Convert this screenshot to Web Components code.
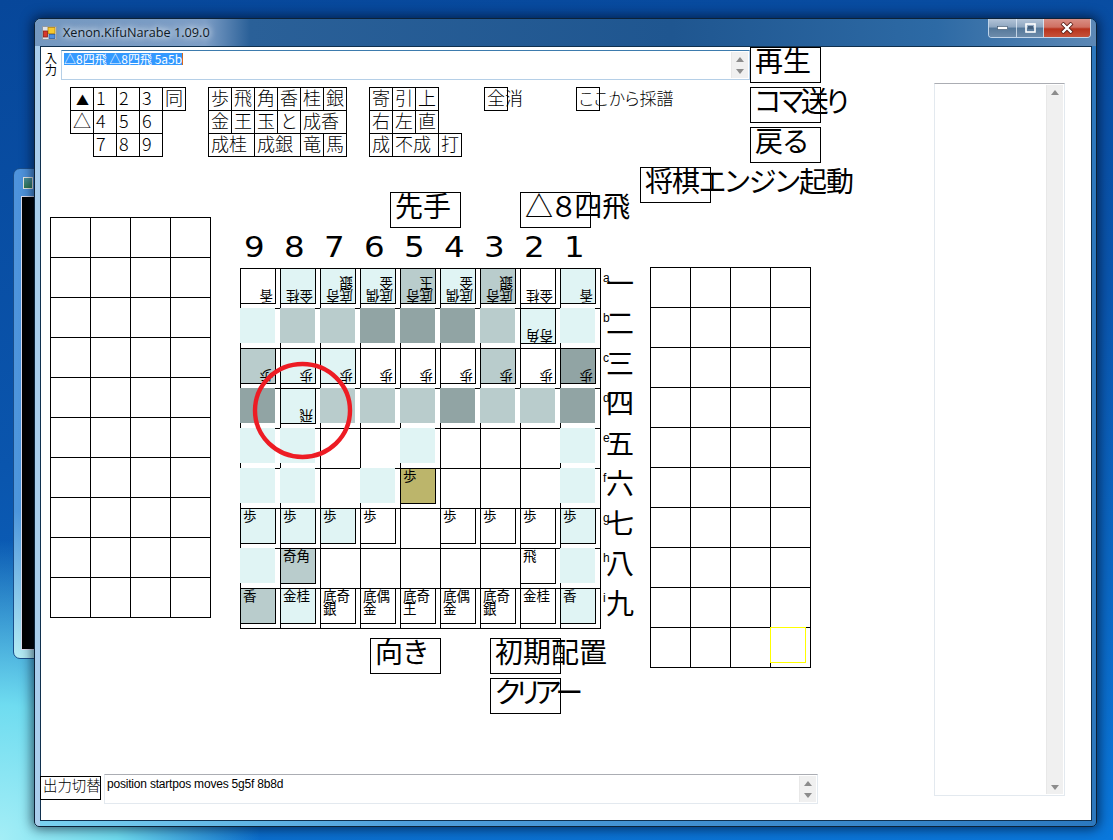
<!DOCTYPE html>
<html lang="ja">
<head>
<meta charset="utf-8">
<title>Xenon.KifuNarabe</title>
<style>
  html, body { margin: 0; height: 100%; overflow: hidden; }
  body {
    font-family: "Noto Sans CJK JP", "Noto Sans", sans-serif;
    background:
      radial-gradient(ellipse 260px 300px at 0 100%, #a4eef6 0%, #6fdcf0 45%, rgba(60,170,225,0) 100%),
      linear-gradient(170deg, #07479a 0%, #0a55ad 45%, #0b68c4 75%, #0a78dc 100%);
  }
</style>
</head>
<body>

<back-window></back-window>
<aero-window caption="Xenon.KifuNarabe 1.09.0">
  <kifu-form></kifu-form>
</aero-window>

<script>
// small push button, the text is allowed to run out of the box like in the real form
class WinButton extends HTMLElement {
  constructor() {
    super();
    this.attachShadow({ mode: 'open' }).innerHTML = `
      <style>
        :host {
          display: block;
          box-sizing: border-box;
          border: 1px solid #000;
          margin: 0 -1px -1px 0;
          padding: 0 0 0 2px;
          background: #fff;
          color: #000;
          font-size: var(--key-size, 18px);
          font-weight: 300;
          line-height: 19px;
          white-space: nowrap;
        }
        :host([big]) {
          width: 71px;
          height: 36px;
          margin: 0;
          padding: 0 0 0 4px;
          font-size: 28px;
          font-weight: 400;
          line-height: 24px;
          font-feature-settings: "palt";
        }
        :host([small]) {
          margin: 0;
          font-size: 14.4px;
          padding: 0 0 0 2px;
          line-height: 15px;
        }
      </style>
      <slot></slot>`;
  }
}

// rows of keys: "," between keys, "|" between rows, "_" leaves a hole, "*2" makes a key two wide
class KeyPad extends HTMLElement {
  connectedCallback() {
    let html = '';
    this.getAttribute('keys').split('|').forEach((row, r) => {
      let col = 1;
      row.split(',').forEach(key => {
        let [label, span] = key.split('*');
        span = Number(span || 1);
        if (label !== '_') {
          html += `<win-button style="grid-row:${r + 1};grid-column:${col} / span ${span}">${label}</win-button>`;
        }
        col += span;
      });
    });
    this.attachShadow({ mode: 'open' }).innerHTML = `
      <style>
        :host { display: grid; grid-auto-columns: 23px; grid-auto-rows: 23px; align-self: start; }
      </style>${html}`;
  }
}

class ScrollBar extends HTMLElement {
  constructor() {
    super();
    this.attachShadow({ mode: 'open' }).innerHTML = `
      <style>
        :host {
          display: flex;
          flex-direction: column;
          align-items: center;
          justify-content: space-between;
          box-sizing: border-box;
          width: 17px;
          padding: 5px 0 4px;
          background: #f0f0f0;
          border-left: 1px solid #e8e8e8;
        }
        svg { display: block; }
      </style>
      <svg width="8" height="5"><polygon points="4,0 8,5 0,5" fill="#8c8c8c"/></svg>
      <svg width="8" height="5"><polygon points="0,0 8,0 4,5" fill="#8c8c8c"/></svg>`;
  }
}

class TextBox extends HTMLElement {
  constructor() {
    super();
    this.attachShadow({ mode: 'open' }).innerHTML = `
      <style>
        :host {
          display: flex;
          box-sizing: border-box;
          border: 1px solid #e3e9ef;
          border-top-color: #abadb3;
          background: #fff;
          color: #000;
          font-size: 12px;
          line-height: 12px;
        }
        :host([focused]) { border-color: #b5cfe7; border-top-color: #3d7bad; }
        .text { flex: 1; padding: 2px; white-space: nowrap; overflow: hidden; }
        scroll-bar { margin: 1px; }
      </style>
      <div class="text"><slot></slot></div>
      <scroll-bar></scroll-bar>`;
  }
}

// one square of the board, or of a hand. tone: l m d o (colours), y (yellow cursor), w (white)
class ShogiPiece extends HTMLElement {
  constructor() {
    super();
    this.attachShadow({ mode: 'open' }).innerHTML = `
      <style>
        :host {
          display: block;
          box-sizing: border-box;
          width: 36px;
          height: 36px;
          margin: -1px 0 0 -1px;
          padding: 0 0 0 2px;
          border: 1px solid #000;
          background: #fff;
          color: #000;
          font-size: 13.5px;
          line-height: 13px;
          position: relative;
        }
        :host([flip]) { transform: rotate(180deg); }
        :host([flat]) { width: 35px; height: 35px; border: 0; }
        :host([tone=l]) { background: #e0f4f4; }
        :host([tone=m]) { background: #b9cccc; }
        :host([tone=d]) { background: #91a4a4; }
        :host([tone=o]) { background: #bcb56b; }
        :host([tone=y]) { border-color: #ffff00; }
      </style>
      <slot></slot>`;
  }
}

class ShogiBoard extends HTMLElement {
  connectedCallback() {
    const rows = [
      'w:香 l:金桂 l:底奇銀 l:底偶金 m:底奇玉 l:底偶金 m:底奇銀 w:金桂 l:香',
      'l m m d d d m l:奇角 l',
      'm:歩 l:歩 l:歩 w:歩 w:歩 w:歩 m:歩 w:歩 d:歩',
      'd l:飛 m m m d m m d',
      'l l - - l - - - l',
      'l l - l o:歩 - - - l',
      'l:歩 l:歩 l:歩 w:歩 - w:歩 w:歩 w:歩 l:歩',
      'l m:奇角 - - - - - w:飛 l',
      'm:香 l:金桂 w:底奇銀 w:底偶金 w:底奇王 w:底偶金 w:底奇銀 w:金桂 l:香'
    ];
    let cells = '';
    rows.forEach((row, r) => {
      row.split(' ').forEach(item => {
        let [tone, label] = item.split(':');
        if (tone === '-') { cells += '<div></div>'; return; }
        // the gote side (a to d) stands upside down
        let flip = r < 4 ? 'flip' : '';
        if (label) cells += `<div><shogi-piece tone="${tone}" ${flip}>${label}</shogi-piece></div>`;
        else cells += `<div><shogi-piece tone="${tone}" flat></shogi-piece></div>`;
      });
    });
    this.attachShadow({ mode: 'open' }).innerHTML = `
      <style>
        :host {
          display: grid;
          grid-template-columns: repeat(9, 40px);
          grid-auto-rows: 40px;
          width: max-content;
          position: relative;
          border-top: 1px solid #000;
          border-left: 1px solid #000;
          background: #fff;
        }
        div { box-sizing: border-box; border-right: 1px solid #000; border-bottom: 1px solid #000; }
        svg { position: absolute; left: 11px; top: 92px; }
      </style>
      ${cells}
      <svg width="101" height="99" viewBox="0 0 101 99">
        <ellipse cx="50.5" cy="49.5" rx="47.5" ry="46.5" fill="none" stroke="#ed1c24" stroke-width="4.4"/>
      </svg>`;
  }
}

// piece stand beside the board, 4 x 10
class ShogiStand extends HTMLElement {
  connectedCallback() {
    let cells = '';
    for (let i = 0; i < 40; i++) {
      let cursor = this.hasAttribute('cursor') && i === 39;
      cells += cursor ? '<div><shogi-piece tone="y"></shogi-piece></div>' : '<div></div>';
    }
    this.attachShadow({ mode: 'open' }).innerHTML = `
      <style>
        :host {
          display: grid;
          grid-template-columns: repeat(4, 40px);
          grid-auto-rows: 40px;
          width: max-content;
          align-self: start;
          border-top: 1px solid #000;
          border-left: 1px solid #000;
        }
        div { box-sizing: border-box; border-right: 1px solid #000; border-bottom: 1px solid #000; }
      </style>${cells}`;
  }
}

class KifuForm extends HTMLElement {
  connectedCallback() {
    let files = [9, 8, 7, 6, 5, 4, 3, 2, 1].map(n => `<span>${n}</span>`).join('');
    let ranks = [...'一二三四五六七八九'].map((k, i) =>
      `<div class="rank"><small>${'abcdefghi'[i]}</small><b>${k}</b></div>`).join('');

    this.attachShadow({ mode: 'open' }).innerHTML = `
      <style>
        :host { display: flex; flex: 1; min-height: 0; color: #000; }
        .main { width: 893px; display: flex; flex-direction: column; }
        .head { display: flex; }
        .head-left { width: 709px; }
        .input-row { display: flex; margin-top: 3px; height: 30px; }
        .input-label { width: 20px; padding: 2px 0 0 4px; box-sizing: border-box; font-size: 12px; line-height: 12px; }
        .input-row text-box { width: 689px; }
        .sel { background: #3399ff; color: #fff; border-right: 1px solid #d2691e; display: inline-block; }
        .keys { display: flex; gap: 23px; padding: 7px 0 0 29px; }
        .keys .tight { --key-size: 17px; font-feature-settings: "palt"; margin-left: 46px; }
        .stack { display: flex; flex-direction: column; gap: 4px; }
        .play {
          display: grid;
          grid-template-columns: 190px 400px auto;
          padding-left: 9px;
          margin-top: 4px;
        }
        .left-stand { margin-top: 50px; }
        .top-btns { display: flex; margin-top: 25px; padding-left: 150px; gap: 59px; }
        .files { display: grid; grid-template-columns: repeat(9, 40px); height: 40px; font: 29px/38px "DejaVu Sans", sans-serif; }
        .files span { padding-left: 4px; transform: scaleX(1.12); transform-origin: 4px 0; }
        .board-row { display: flex; }
        .ranks { display: grid; grid-auto-rows: 40px; }
        .rank { display: flex; padding-left: 2px; }
        .rank small { width: 3px; font: 12px/12px "Liberation Sans", sans-serif; margin-top: 4px; }
        .rank b { font-weight: 400; font-size: 28px; line-height: 28px; }
        .bottom-btns { display: flex; padding: 9px 0 0 130px; gap: 49px; }
        .bottom-col { display: flex; flex-direction: column; gap: 4px; }
        .right { display: flex; flex-direction: column; align-items: flex-start; }
        .right shogi-stand { margin: 64px 0 0 10px; }
        .output { display: flex; margin: auto 0 16px -1px; }
        .output win-button { width: 61px; height: 24px; margin: 2px 0 0; padding-left: 2px; }
        .output text-box { width: 714px; height: 30px; margin-left: 3px; }
        .output-text { font-family: "Liberation Sans", sans-serif; letter-spacing: -.2px; }
        .log { width: 131px; height: 713px; margin-top: 36px; }
      </style>

      <div class="main">
        <div class="head">
          <div class="head-left">
            <div class="input-row">
              <div class="input-label">入力</div>
              <text-box focused><span class="sel">△8四飛 △8四飛 5a5b</span></text-box>
            </div>
            <div class="keys">
              <key-pad keys="<span style='font-size:13px;padding-left:3px'>▲</span>,1,2,3,同|△,4,5,6|_,7,8,9"></key-pad>
              <key-pad keys="歩,飛,角,香,桂,銀|金,王,玉,と,成香*2|成桂*2,成銀*2,竜,馬"></key-pad>
              <key-pad keys="寄,引,上|右,左,直|成,不成*2,打"></key-pad>
              <key-pad keys="全消"></key-pad>
              <key-pad class="tight" keys="ここから採譜"></key-pad>
            </div>
          </div>
          <div class="stack">
            <win-button big>再生</win-button>
            <win-button big style="letter-spacing:-3px">コマ送り</win-button>
            <win-button big>戻る</win-button>
          </div>
        </div>

        <div class="play">
          <shogi-stand class="left-stand"></shogi-stand>
          <div>
            <div class="top-btns">
              <win-button big>先手</win-button>
              <win-button big>△８四飛</win-button>
            </div>
            <div class="files">${files}</div>
            <div class="board-row">
              <shogi-board></shogi-board>
              <div class="ranks">${ranks}</div>
            </div>
            <div class="bottom-btns">
              <win-button big>向き</win-button>
              <div class="bottom-col">
                <win-button big>初期配置</win-button>
                <win-button big style="letter-spacing:-4px">クリアー</win-button>
              </div>
            </div>
          </div>
          <div class="right">
            <win-button big style="letter-spacing:-1px">将棋エンジン起動</win-button>
            <shogi-stand cursor></shogi-stand>
          </div>
        </div>

        <div class="output">
          <win-button small>出力切替</win-button>
          <text-box><span class="output-text">position startpos moves 5g5f 8b8d</span></text-box>
        </div>
      </div>

      <text-box class="log"></text-box>`;
  }
}

class AeroWindow extends HTMLElement {
  connectedCallback() {
    this.attachShadow({ mode: 'open' }).innerHTML = `
      <style>
        :host {
          position: absolute;
          left: 34px;
          top: 18px;
          width: 1063px;
          height: 809px;
          box-sizing: border-box;
          display: flex;
          flex-direction: column;
          border: 1px solid #0c2238;
          border-radius: 7px 7px 5px 5px;
          box-shadow: 0 0 12px 2px rgba(0, 10, 30, .65);
          overflow: hidden;
          background:
            linear-gradient(90deg, #a9cdec 0, #a9cdec 5px, transparent 5px, transparent calc(100% - 5px), #2d78bd calc(100% - 5px)),
            linear-gradient(90deg, #7ad2f0 0%, #4f9fdc 35%, #2b79c0 100%);
        }
        .bar {
          height: 27px;
          display: flex;
          align-items: flex-start;
          background: linear-gradient(90deg, #7498c0 0, #7d9ec6 170px, #2a6098 215px, #1f5690 60%, #2d6aa5 85%, #5c88b5 100%);
        }
        .icon { margin: 7px 0 0 7px; }
        .title {
          margin: 5px 0 0 6px;
          font: 12.7px/16px "Open Sans", "Noto Sans", sans-serif;
          color: #0e1a26;
          text-shadow: 0 0 7px #fff, 0 0 7px rgba(255,255,255,.7);
        }
        .caption {
          margin-left: auto;
          margin-right: 5px;
          display: flex;
          height: 19px;
          box-sizing: border-box;
          border: 1px solid rgba(235, 245, 255, .75);
          border-top: 0;
          border-radius: 0 0 4px 4px;
          overflow: hidden;
        }
        .caption div { display: flex; align-items: center; justify-content: center; }
        .min, .max {
          width: 27px;
          background: linear-gradient(#b3c4d8 0, #8ea6c0 45%, #547799 50%, #6d8cab 100%);
          border-right: 1px solid rgba(235, 245, 255, .7);
        }
        .max { width: 26px; }
        .close { width: 46px; background: linear-gradient(#d98f85 0, #cf7062 45%, #b8331d 55%, #c6523a 100%); }
        .body { flex: 1; min-height: 0; display: flex; padding: 0 4px 5px 5px; }
        .client { flex: 1; display: flex; box-sizing: border-box; background: #fff; border: 1px solid #10304e; min-width: 0; }
        ::slotted(*) { flex: 1; }
      </style>
      <div class="bar">
        <svg class="icon" width="15" height="14" viewBox="0 0 15 14">
          <rect x=".5" y=".5" width="14" height="13" fill="#dfe3e8" stroke="#8f99a5"/>
          <rect x="6" y="1.5" width="7" height="6" fill="#f7c92e" stroke="#b5860c" stroke-width=".8"/>
          <rect x="1.5" y="5" width="4" height="6" fill="#d8382c" stroke="#8a1c14" stroke-width=".8"/>
          <rect x="7" y="8.5" width="6" height="4" fill="#4f8fe0" stroke="#2a5a9e" stroke-width=".8"/>
        </svg>
        <div class="title">${this.getAttribute('caption')}</div>
        <div class="caption">
          <div class="min"><svg width="11" height="4"><rect x=".5" y=".5" width="10" height="3" fill="#fff" stroke="#3a4f66" stroke-width=".6"/></svg></div>
          <div class="max"><svg width="11" height="10"><rect x="1" y="1" width="9" height="8" fill="none" stroke="#fff" stroke-width="1.6"/><rect x="3" y="3" width="5" height="3" fill="#45607e"/></svg></div>
          <div class="close"><svg width="14" height="12" viewBox="0 0 14 12"><path d="M2 1 L12 11 M12 1 L2 11" stroke="#5a1f17" stroke-width="4"/><path d="M2.5 1.5 L11.5 10.5 M11.5 1.5 L2.5 10.5" stroke="#fff" stroke-width="2.4"/></svg></div>
        </div>
      </div>
      <div class="body"><div class="client"><slot></slot></div></div>`;
  }
}

// the other window that sticks out behind on the left
class BackWindow extends HTMLElement {
  connectedCallback() {
    this.attachShadow({ mode: 'open' }).innerHTML = `
      <style>
        :host {
          position: absolute;
          left: 13px;
          top: 168px;
          width: 40px;
          height: 491px;
          box-sizing: border-box;
          border-radius: 7px;
          border: 1px solid #1a4f8c;
          background: linear-gradient(#4e93dc 0, #4d96dc 70%, #b5ecf4 100%);
        }
        .icon { margin: 8px 0 0 9px; width: 8px; height: 10px; border: 1px solid #e8e8e0; background: linear-gradient(#4a8f9a, #2f7a52); }
        .inner { margin: 7px 0 0 7px; height: 452px; background: #000; border: 1px solid #dde; border-width: 1px 0 1px 1px; }
      </style>
      <div class="icon"></div>
      <div class="inner"></div>`;
  }
}

customElements.define('win-button', WinButton);
customElements.define('key-pad', KeyPad);
customElements.define('scroll-bar', ScrollBar);
customElements.define('text-box', TextBox);
customElements.define('shogi-piece', ShogiPiece);
customElements.define('shogi-board', ShogiBoard);
customElements.define('shogi-stand', ShogiStand);
customElements.define('kifu-form', KifuForm);
customElements.define('aero-window', AeroWindow);
customElements.define('back-window', BackWindow);
</script>
</body>
</html>
